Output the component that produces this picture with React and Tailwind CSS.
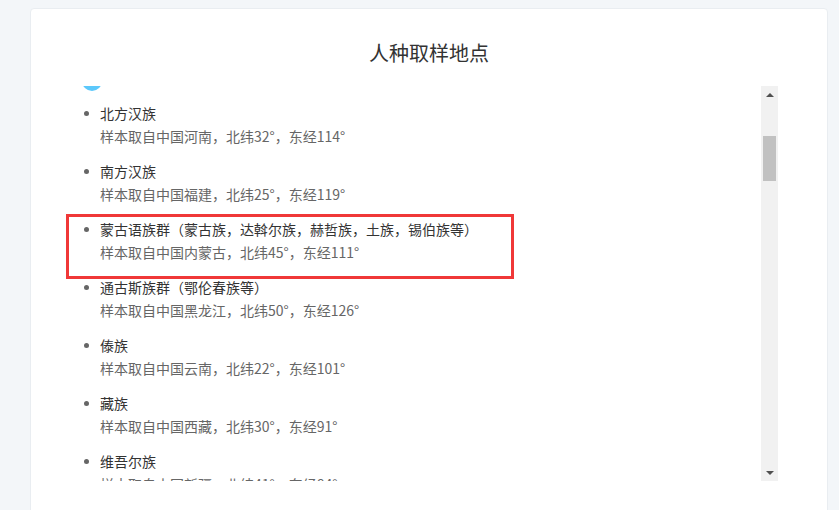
const samples = [
  { name: "北方汉族", place: "样本取自中国河南，北纬32°，东经114°" },
  { name: "南方汉族", place: "样本取自中国福建，北纬25°，东经119°" },
  {
    name: "蒙古语族群（蒙古族，达斡尔族，赫哲族，土族，锡伯族等）",
    place: "样本取自中国内蒙古，北纬45°，东经111°",
    marked: true,
  },
  { name: "通古斯族群（鄂伦春族等）", place: "样本取自中国黑龙江，北纬50°，东经126°" },
  { name: "傣族", place: "样本取自中国云南，北纬22°，东经101°" },
  { name: "藏族", place: "样本取自中国西藏，北纬30°，东经91°" },
  { name: "维吾尔族", place: "样本取自中国新疆，北纬41°，东经84°" },
];

const App = () => {
  return (
    <div
      className="h-[510px] overflow-hidden bg-[#f3f6f9] pt-[8px] pl-[30px] pr-[11px]"
      style={{ fontFamily: '"Microsoft YaHei", "Noto Sans CJK SC", "Noto Sans", sans-serif' }}
    >
      <div className="h-[540px] rounded-[4px] border border-[#e9edf1] bg-white pt-[30px]">
        <h2 className="text-center text-[20px] leading-[28px] font-normal text-[#333]">
          人种取样地点
        </h2>

        <div className="mt-[19px] flex h-[395px] pl-[33px] pr-[49px]">
          <div className="flex-1 overflow-hidden pl-[16px]">
            <div className="ml-[2px] -mt-[15px] h-5 w-5 rounded-full bg-[#5cc8fb]" />
            <ul className="mt-[11px]">
              {samples.map((item) => (
                <li key={item.name} className="relative mb-[12px] flex text-[14px] leading-[23px]">
                  <div className="w-5 shrink-0">
                    <span className="ml-[4px] mt-[9px] block h-[5px] w-[5px] rounded-full bg-[#666]" />
                  </div>
                  <div>
                    <div className="text-[#333]">{item.name}</div>
                    <div className="text-[#666]">{item.place}</div>
                  </div>
                  {item.marked && (
                    <div className="pointer-events-none absolute -left-[14px] -top-[4px] h-[65px] w-[448px] border-[3px] border-[#f03838]" />
                  )}
                </li>
              ))}
            </ul>
          </div>

          <div className="flex w-[17px] shrink-0 flex-col items-center bg-[#f1f1f1]">
            <div className="flex h-[17px] items-center justify-center">
              <span className="h-0 w-0 border-x-[4px] border-b-[4px] border-x-transparent border-b-[#505050]" />
            </div>
            <div className="mt-[33px] h-[45px] w-[13px] bg-[#c1c1c1]" />
            <div className="flex-1" />
            <div className="flex h-[17px] items-center justify-center">
              <span className="h-0 w-0 border-x-[4px] border-t-[4px] border-x-transparent border-t-[#505050]" />
            </div>
          </div>
        </div>
      </div>
    </div>
  );
};

export default App;
